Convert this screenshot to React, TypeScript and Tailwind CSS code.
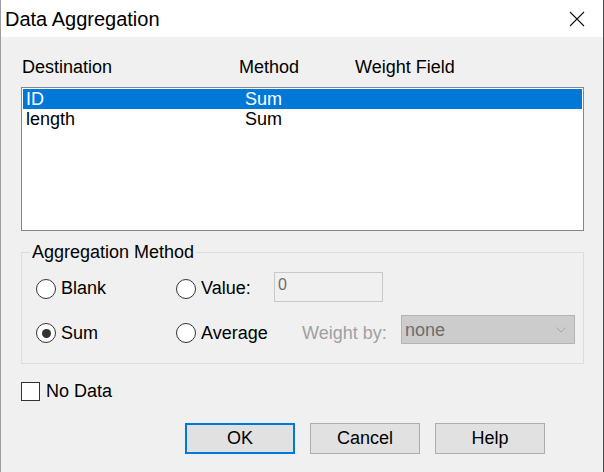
import React from "react"

const ROWS = [
  { dest: "ID", method: "Sum", selected: true },
  { dest: "length", method: "Sum", selected: false },
]

function Radio({ checked = false }: { checked?: boolean }) {
  return (
    <span className="flex h-[20px] w-[20px] shrink-0 items-center justify-center rounded-full border border-[#333333] bg-white">
      {checked && <span className="h-[9px] w-[9px] rounded-full bg-[#333333]" />}
    </span>
  )
}

function DialogButton({
  label,
  primary = false,
}: {
  label: string
  primary?: boolean
}) {
  return (
    <button
      className={`flex h-[31px] w-[110px] items-center justify-center bg-[#e1e1e1] text-[18px] text-black ${
        primary ? "border-2 border-[#0078d7]" : "border border-[#adadad]"
      }`}
    >
      {label}
    </button>
  )
}

export default function App() {
  return (
    <div
      className="flex h-[472px] w-[604px] bg-[#4a4a4a]"
      style={{ fontFamily: '"Liberation Sans", Arial, sans-serif' }}
    >
      <div className="flex h-full w-[603px] flex-col border-l border-[#9d9d9d] bg-[#f0f0f0]">
        {/* title bar */}
        <div className="flex h-[37px] items-center justify-between bg-white pl-[4px] pr-[18px]">
          <span className="text-[20px] leading-[24px] text-black">Data Aggregation</span>
          <svg width="16" height="16" viewBox="0 0 16 16" className="mt-[1px]">
            <path d="M1 1 L15 15 M15 1 L1 15" stroke="#111111" strokeWidth="1.1" fill="none" />
          </svg>
        </div>

        <div className="flex flex-col pl-[20px] pt-[19px] text-[18px] text-black">
          {/* column headers */}
          <div className="flex h-[22px] items-center leading-[22px]">
            <span className="w-[218px] pl-[1px]">Destination</span>
            <span className="w-[116px]">Method</span>
            <span>Weight Field</span>
          </div>

          {/* list */}
          <div className="mt-[9px] h-[144px] w-[563px] border border-[#828790] bg-white p-[1px]">
            {ROWS.map((r) => (
              <div
                key={r.dest}
                className={`flex h-[20px] items-center pl-[3px] leading-[20px] ${
                  r.selected ? "bg-[#0078d7] text-white" : "text-black"
                }`}
              >
                <span className="w-[219px]">{r.dest}</span>
                <span>{r.method}</span>
              </div>
            ))}
          </div>

          {/* aggregation method group */}
          <div className="relative mt-[21px] w-[563px] border border-[#dcdcdc] pb-[12px] pl-[14px] pt-[19px]">
            <span className="absolute left-[8px] top-[-12px] bg-[#f0f0f0] px-[2px] leading-[22px]">
              Aggregation Method
            </span>

            <div className="flex h-[33px] items-center">
              <div className="flex w-[140px] items-center gap-[5px]">
                <Radio />
                <span>Blank</span>
              </div>
              <div className="flex w-[98px] items-center gap-[5px]">
                <Radio />
                <span>Value:</span>
              </div>
              <div className="flex h-[30px] w-[109px] self-start border border-[#c8c8c8] bg-[#f0f0f0] pl-[3px] pt-[2px] text-[16px] leading-[20px] text-[#6d6d6d]">
                0
              </div>
            </div>

            <div className="mt-[10px] flex h-[36px] items-center">
              <div className="flex w-[140px] items-center gap-[5px]">
                <Radio checked />
                <span>Sum</span>
              </div>
              <div className="flex w-[126px] items-center gap-[5px]">
                <Radio />
                <span>Average</span>
              </div>
              <span className="w-[99px] text-[#a0a0a0]">Weight by:</span>
              <div className="flex h-[29px] w-[174px] items-center justify-between self-start border border-[#b4b4b4] bg-[#cccccc] pl-[3px] pr-[8px] text-[#6d6d6d]">
                <span className="leading-[22px]">none</span>
                <svg width="10" height="6" viewBox="0 0 10 6">
                  <path d="M0.5 0.5 L5 5 L9.5 0.5" stroke="#a8a8a8" strokeWidth="1" fill="none" />
                </svg>
              </div>
            </div>
          </div>

          {/* no data */}
          <div className="mt-[16px] flex items-center gap-[6px]">
            <span className="h-[19px] w-[19px] border border-[#333333] bg-white" />
            <span className="leading-[22px]">No Data</span>
          </div>

          {/* buttons */}
          <div className="mt-[21px] flex gap-[15px] pl-[164px]">
            <DialogButton label="OK" primary />
            <DialogButton label="Cancel" />
            <DialogButton label="Help" />
          </div>
        </div>
      </div>
    </div>
  )
}
